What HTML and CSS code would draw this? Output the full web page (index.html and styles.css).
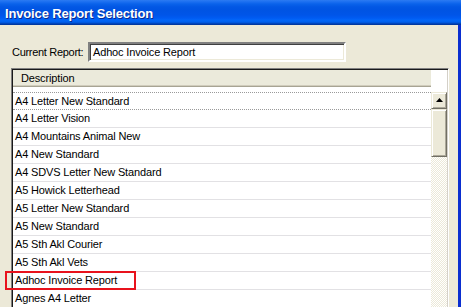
FILE: index.html
```html
<!DOCTYPE html>
<html>
<head>
<meta charset="utf-8">
<link rel="stylesheet" href="styles.css">
</head>
<body>
<div class="window">
  <div class="titlebar">Invoice Report Selection</div>
  <div class="frame">
    <div class="content">
      <div class="current">
        <span class="label">Current Report:</span>
        <div class="input">Adhoc Invoice Report</div>
      </div>
      <div class="list">
        <div class="header">
          <div class="col">Description</div>
          <div class="corner"></div>
        </div>
        <div class="gap"></div>
        <div class="body">
          <div class="rows">
            <div class="row focus">A4 Letter New Standard</div>
            <div class="row">A4 Letter Vision</div>
            <div class="row">A4 Mountains Animal New</div>
            <div class="row">A4 New Standard</div>
            <div class="row">A4 SDVS Letter New Standard</div>
            <div class="row">A5 Howick Letterhead</div>
            <div class="row">A5 Letter New Standard</div>
            <div class="row">A5 New Standard</div>
            <div class="row">A5 Sth Akl Courier</div>
            <div class="row">A5 Sth Akl Vets</div>
            <div class="row">Adhoc Invoice Report</div>
            <div class="row">Agnes A4 Letter</div>
          </div>
          <div class="scrollbar">
            <div class="btn"><svg width="7" height="4" viewBox="0 0 7 4"><polygon points="3.5,0 7,4 0,4" fill="#000"/></svg></div>
            <div class="thumb"></div>
            <div class="track"></div>
          </div>
        </div>
      </div>
    </div>
  </div>
  <div class="highlight"></div>
</div>
</body>
</html>
```
FILE: styles.css
```css
html, body {
  margin: 0;
  padding: 0;
  background: #ECE9D8;
}
.window {
  position: relative;
  width: 461px;
  height: 307px;
  overflow: hidden;
  display: flex;
  flex-direction: column;
  font-family: "Liberation Sans", Arial, sans-serif;
  font-size: 11px;
  letter-spacing: -0.15px;
  color: #000;
}
.titlebar {
  flex: none;
  height: 23px;
  padding-top: 2px;
  padding-left: 5px;
  line-height: 23px;
  font-size: 13px;
  font-weight: bold;
  letter-spacing: -0.15px;
  color: #fff;
  text-shadow: 1px 1px #0B2A8E;
  background: linear-gradient(to bottom,
    #2C7BF2 0px, #1A6EF0 2px, #0A62EA 4px, #0257E4 7px, #0054E3 10px,
    #0055E8 15px, #005BF2 18px, #0266F8 20px, #0060EC 22px, #0050D2 23px, #003CA8 24px, #00349A 25px);
}
.frame {
  flex: 1;
  display: flex;
  border-right: 3px solid #0A2ED0;
}
.content {
  flex: 1;
  padding: 17px 9px 0 11px;
  display: flex;
  flex-direction: column;
}
.current {
  display: flex;
  height: 20px;
  align-items: stretch;
}
.label {
  margin-left: 1px;
  width: 76px;
  line-height: 21px;
  letter-spacing: -0.3px;
}
.input {
  width: 251px;
  height: 16px;
  padding-left: 3px;
  line-height: 16px;
  background: #fff;
  border-style: solid;
  border-width: 2px;
  border-color: #808080 #fff #fff #808080;
  box-shadow: inset 1px 1px #404040, inset -1px -1px #ECE9D8;
}
.list {
  margin-top: 6px;
  width: 434px;
  height: 260px;
  background: #fff;
  border-style: solid;
  border-width: 2px;
  border-color: #808080 #fff #fff #808080;
  box-shadow: inset 1px 1px #1a1a1a, inset -1px -1px #D4D0C8;
  padding: 0;
  display: flex;
  flex-direction: column;
}
.list {
  border-width: 1px;
  padding: 1px;
  width: 434px;
}
.header {
  display: flex;
  height: 17px;
  flex: none;
}
.col {
  width: 410px;
  padding-left: 8px;
  height: 17px;
  line-height: 17px;
  background: #EBEADB;
  box-shadow: inset 0 -1px #A7A493, inset 0 -2px #D0CCBC;
}
.corner {
  flex: 1;
  background: #fff;
}
.gap {
  height: 5px;
  flex: none;
}
.body {
  flex: 1;
  display: flex;
}
.rows {
  width: 418px;
}
.row {
  height: 17px;
  line-height: 17px;
  padding-left: 2px;
  border-bottom: 1px solid #E2E1E4;
  white-space: nowrap;
}
.row.focus {
  height: 16px;
  line-height: 16px;
  border-top: 1px dotted #9a9a9a;
  border-bottom: 1px dotted #9a9a9a;
}
.scrollbar {
  width: 16px;
  display: flex;
  flex-direction: column;
}
.btn, .thumb {
  box-sizing: border-box;
  background: #ECE9D8;
  border-style: solid;
  border-width: 1px;
  border-color: #ECE9D8 #716F64 #716F64 #ECE9D8;
  box-shadow: inset 1px 1px #fff, inset -1px -1px #ACA899;
}
.btn {
  height: 17px;
  display: flex;
  align-items: center;
  justify-content: center;
  padding-bottom: 2px;
}
.btn svg {
  display: block;
  margin-left: 0;
}
.thumb {
  height: 48px;
}
.track {
  flex: 1;
  background-color: #fff;
  background-image: conic-gradient(#ECE9D8 25%, #fff 0 50%, #ECE9D8 0 75%, #fff 0);
  background-size: 2px 2px;
}
.highlight {
  position: absolute;
  left: 5px;
  top: 271px;
  width: 131px;
  height: 19px;
  box-sizing: border-box;
  border: 2px solid #E8121C;
}
```
